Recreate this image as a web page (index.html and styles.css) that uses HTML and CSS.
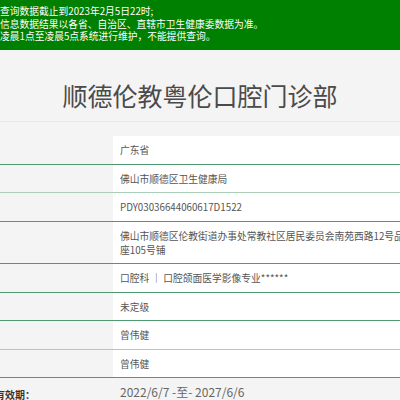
FILE: index.html
```html
<!DOCTYPE html>
<html lang="zh-CN">
<head>
<meta charset="utf-8">
<title>顺德伦教粤伦口腔门诊部</title>
<link rel="stylesheet" href="styles.css">
</head>
<body>
<div class="page">
  <div class="notice">
    <p>查询数据截止到2023年2月5日22时;</p>
    <p>信息数据结果以各省、自治区、直辖市卫生健康委数据为准。</p>
    <p>凌晨1点至凌晨5点系统进行维护，不能提供查询。</p>
  </div>
  <h1 class="title">顺德伦教粤伦口腔门诊部</h1>
  <div class="info">
    <div class="row"><div class="label"></div><div class="value">广东省</div></div>
    <div class="row light"><div class="label"></div><div class="value">佛山市顺德区卫生健康局</div></div>
    <div class="row"><div class="label"></div><div class="value">PDY03036644060617D1522</div></div>
    <div class="row"><div class="label"></div><div class="value">佛山市顺德区伦教街道办事处常教社区居民委员会南苑西路12号品座105号铺</div></div>
    <div class="row"><div class="label"></div><div class="value">口腔科 ｜ 口腔颌面医学影像专业******</div></div>
    <div class="row"><div class="label"></div><div class="value">未定级</div></div>
    <div class="row light"><div class="label"></div><div class="value">曾伟健</div></div>
    <div class="row"><div class="label"></div><div class="value">曾伟健</div></div>
    <div class="row period"><div class="label">有效期：</div><div class="value">2022/6/7 -至- 2027/6/6</div></div>
  </div>
</div>
</body>
</html>
```
FILE: styles.css
```css
html, body {
  margin: 0;
  padding: 0;
  background: #f4f4f4;
  overflow: hidden;
}
.page {
  width: 400px;
  font-family: "Noto Sans CJK SC", "Noto Sans", sans-serif;
}
.notice {
  background: #008000;
  color: #ffffff;
  font-size: 9.75px;
  line-height: 12.5px;
  padding: 5px 0 7.5px 0;
  white-space: nowrap;
}
.notice p {
  margin: 0;
}
.title {
  margin: 0 0 14px 0;
  padding: 28px 0 9px;
  font-size: 25px;
  line-height: 34px;
  font-weight: normal;
  color: #4a4a4a;
  text-align: center;
  border-bottom: 1px solid #e9e9e9;
}
.info {
  width: 417px;
}
.row {
  display: flex;
  border-bottom: 1px solid #4f9a70;
}
.row.light {
  border-bottom-color: #a9cfb7;
}
.label {
  width: 113px;
  flex: none;
  font-size: 10px;
  font-weight: bold;
  color: #333;
}
.value {
  flex: 1;
  background: #ffffff;
  padding: 7px 7px 6.5px;
  font-size: 9.75px;
  line-height: 14px;
  color: #555;
}
.row.period {
  border-bottom: none;
  align-items: center;
}
.row.period .label {
  text-indent: -5px;
  line-height: 14px;
  padding-top: 7px;
}
.row.period .value {
  background: transparent;
  font-size: 12px;
  color: #666;
}
```
